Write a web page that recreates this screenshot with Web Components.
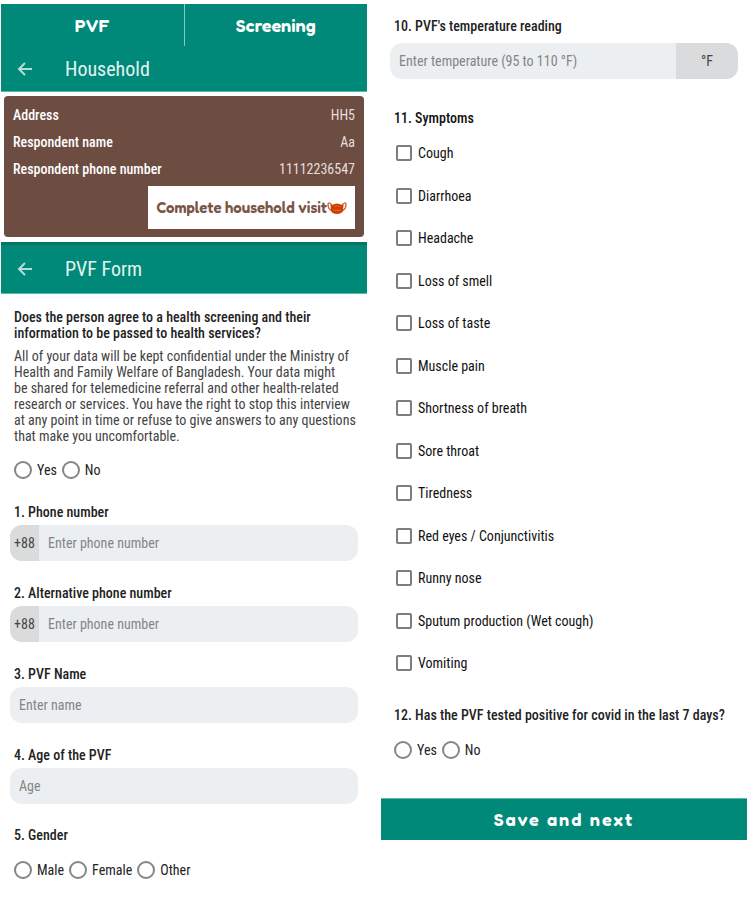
<!DOCTYPE html>
<html lang="en">
<head>
<meta charset="utf-8">
<meta name="viewport" content="width=device-width, initial-scale=1">
<title>PVF Form</title>
<style>
  body {
    margin: 0;
    background: #fff;
    color: #222;
    font: 400 14px/16px "Roboto Condensed", Roboto, "Liberation Sans", sans-serif;
    --teal: #008878;
    --teal-dark: #007566;
    --teal-light: #5cb8ac;
    --brown: #6d4c41;
    --field: #ebeff2;
    --affix: #dadbdd;
    --display: Fredoka, "DejaVu Sans", sans-serif;
  }
</style>
</head>
<body>
<pvf-screens>
  <section slot="start">
    <tab-strip></tab-strip>
    <app-bar heading="Household"></app-bar>
    <household-card>
      <info-row label="Address">HH5</info-row>
      <info-row label="Respondent name">Aa</info-row>
      <info-row label="Respondent phone number">11112236547</info-row>
    </household-card>
    <app-bar heading="PVF Form" raised></app-bar>
    <consent-text>
      <span slot="question">Does the person agree to a health screening and their<br>information to be passed to health services?</span>
      All of your data will be kept confidential under the Ministry of Health and Family Welfare of Bangladesh. Your data might<br>be shared for telemedicine referral and other health-related research or services. You have the right to stop this interview at any point in time or refuse to give answers to any questions that make you uncomfortable.
    </consent-text>
    <choice-row name="consent" label="Consent" options="Yes|No"></choice-row>
    <text-field label="1. Phone number" hint="Enter phone number" prefix-text="+88" type="tel"></text-field>
    <text-field label="2. Alternative phone number" hint="Enter phone number" prefix-text="+88" type="tel"></text-field>
    <text-field label="3. PVF Name" hint="Enter name"></text-field>
    <text-field label="4. Age of the PVF" hint="Age"></text-field>
    <choice-row name="gender" heading="5. Gender" options="Male|Female|Other"></choice-row>
  </section>
  <section slot="end">
    <text-field class="first" label="10. PVF's temperature reading" hint="Enter temperature (95 to 110 °F)" suffix-text="°F"></text-field>
    <symptom-list heading="11. Symptoms" options="Cough|Diarrhoea|Headache|Loss of smell|Loss of taste|Muscle pain|Shortness of breath|Sore throat|Tiredness|Red eyes / Conjunctivitis|Runny nose|Sputum production (Wet cough)|Vomiting"></symptom-list>
    <choice-row name="covid" heading="12. Has the PVF tested positive for covid in the last 7 days?" options="Yes|No"></choice-row>
    <save-bar>Save and next</save-bar>
  </section>
</pvf-screens>

<script>
const define = (name, render) => customElements.define(name, class extends HTMLElement {
  constructor() {
    super();
    this.attachShadow({ mode: "open" });
  }
  connectedCallback() {
    this.shadowRoot.innerHTML = "<style>*{box-sizing:border-box}</style>" + render(this);
  }
});
const attr = (el, name) => el.getAttribute(name) || "";
const split = (el) => attr(el, "options").split("|");

define("pvf-screens", () => `
  <style>
    :host { display: grid; grid-template-columns: 1fr 1fr; gap: 14px; padding: 4px 0 0 1px; align-items: start; }
  </style>
  <slot name="start"></slot><slot name="end"></slot>`);

define("tab-strip", () => `
  <style>
    :host { display: block; background: var(--teal); }
    nav { display: flex; }
    button { flex: 1; height: 42px; padding: 0; border: 0; background: none; color: #fff; font: 600 18px/24px var(--display); }
    button + button { border-left: 1px solid #8dc9c0; }
  </style>
  <nav><button type="button">PVF</button><button type="button">Screening</button></nav>`);

define("app-bar", (el) => `
  <style>
    :host { display: block; background: var(--teal); border-bottom: 1px solid var(--teal-light); }
    :host([raised]) { border-top: 3px solid var(--teal-dark); }
    header { display: flex; align-items: center; gap: 25px; height: 45px; padding: 0 9px; color: #e3f3f1; }
    :host([raised]) header { height: 48px; }
    button { display: flex; width: 30px; height: 30px; padding: 0; border: 0; background: none; color: inherit; align-items: center; justify-content: center; }
    h1 { margin: 0; font-size: 20px; line-height: 24px; font-weight: 400; }
  </style>
  <header>
    <button type="button" aria-label="Back">
      <svg width="16" height="14" viewBox="0 0 16 14" fill="none" stroke="#b5ddd8" stroke-width="2"><path d="M15 7H2M8 1 2 7l6 6"/></svg>
    </button>
    <h1>${attr(el, "heading")}</h1>
  </header>`);

define("household-card", () => `
  <style>
    :host { display: block; margin: 4px 3px 5px; padding: 6px 9px 8px; border-radius: 4px; background: var(--brown); color: #fff; }
    .action { display: flex; justify-content: flex-end; margin-top: 3px; }
    button { display: flex; align-items: center; height: 43px; padding: 0 8px; border: 0; background: #fff; color: #795548; font: 600 15px/20px var(--display); }
  </style>
  <slot></slot>
  <div class="action">
    <button type="button">Complete household visit
      <svg width="20" height="14" viewBox="0 0 20 14" aria-hidden="true">
        <g fill="none" stroke="#d4561f" stroke-width="1.300"><path d="M5 5C3.500 1.500 1 1 1 3.500S2.500 9 5.500 10M15 5c1.500-3.500 4-4 4-1.500S17.500 9 14.500 10"/></g>
        <path d="M3.500 3.500Q6 4 7.500 3 10 2 12.500 3 14 4 16.500 3.500L16 10q-1 2.500-6 3-5-.5-6-3z" fill="#cc4100"/>
        <path d="M7 5.500q3-1.500 6 0M6 9q4 1 8 0" fill="none" stroke="#e2703f" stroke-width=".8"/>
      </svg>
    </button>
  </div>`);

define("info-row", (el) => `
  <style>
    :host { display: flex; justify-content: space-between; line-height: 27px; color: #e6dedb; }
    b { font-weight: 500; color: #fff; }
  </style>
  <b>${attr(el, "label")}</b><span><slot></slot></span>`);

define("consent-text", () => `
  <style>
    :host { display: block; padding: 15px 8px 0 13px; }
    h2 { margin: 0 0 7px; font: inherit; font-weight: 500; }
    p { margin: 0; color: #444; }
  </style>
  <h2><slot name="question"></slot></h2><p><slot></slot></p>`);

define("text-field", (el) => `
  <style>
    :host { display: block; padding: 23px 9px 0; }
    :host(.first) { padding-top: 13px; }
    label { display: block; padding: 0 4px; font-weight: 500; line-height: 18px; margin-bottom: 4px; }
    :host(.first) label { margin-bottom: 8px; }
    .box { display: flex; height: 36px; border-radius: 12px; overflow: hidden; background: var(--field); }
    input { flex: 1; min-width: 0; padding: 0 9px; border: 0; background: none; font: inherit; color: #222; }
    input::placeholder { color: #858585; opacity: 1; }
    span { display: flex; align-items: center; justify-content: center; background: var(--affix); color: #444; }
    .pre { width: 29px; }
    .suf { width: 62px; }
  </style>
  <label for="f">${attr(el, "label")}</label>
  <div class="box">
    ${attr(el, "prefix-text") && `<span class="pre">${attr(el, "prefix-text")}</span>`}
    <input id="f" type="${attr(el, "type") || "text"}" placeholder="${attr(el, "hint")}">
    ${attr(el, "suffix-text") && `<span class="suf">${attr(el, "suffix-text")}</span>`}
  </div>`);

define("choice-row", (el) => `
  <style>
    :host { display: block; padding: 17px 13px 1px; }
    :host([heading]) { padding: 22px 13px 0; }
    h2 { margin: 0 0 17px; font: inherit; font-weight: 500; line-height: 18px; }
    div { display: flex; gap: 5px; }
    label { display: flex; align-items: center; gap: 5px; line-height: 18px; }
    input { appearance: none; width: 18px; height: 18px; margin: 0; border: 2px solid #858585; border-radius: 50%; }
    input:checked { background: radial-gradient(var(--teal) 45%, transparent 50%); }
  </style>
  ${attr(el, "heading") && `<h2 id="h">${attr(el, "heading")}</h2>`}
  <div role="radiogroup" ${attr(el, "heading") ? 'aria-labelledby="h"' : `aria-label="${attr(el, "label")}"`}>
    ${split(el).map((o) => `<label><input type="radio" name="${attr(el, "name")}">${o}</label>`).join("")}
  </div>`);

define("symptom-list", (el) => `
  <style>
    :host { display: block; padding: 30px 13px 0; color: #111; }
    h2 { margin: 0 0 5px; font: inherit; font-weight: 500; line-height: 18px; }
    ul { margin: 0; padding: 0; list-style: none; }
    li { display: flex; align-items: center; height: 42px; }
    li:nth-child(even) { height: 43px; }
    label { display: flex; align-items: center; gap: 6px; padding-left: 2px; }
    input { appearance: none; width: 16px; height: 16px; margin: 0; border: 2px solid #7d7d7d; border-radius: 2px; }
    input:checked { background: var(--teal); }
  </style>
  <h2>${attr(el, "heading")}</h2>
  <ul>${split(el).map((o) => `<li><label><input type="checkbox">${o}</label></li>`).join("")}</ul>`);

define("save-bar", () => `
  <style>
    :host { display: block; padding-top: 39px; }
    button { display: block; width: 100%; height: 42px; padding: 0 0 2px; border: 0; border-top: 1px solid var(--teal-light); background: var(--teal); color: #fff; font: 600 18px/24px var(--display); letter-spacing: 2px; }
  </style>
  <button type="button"><slot></slot></button>`);
</script>
</body>
</html>
